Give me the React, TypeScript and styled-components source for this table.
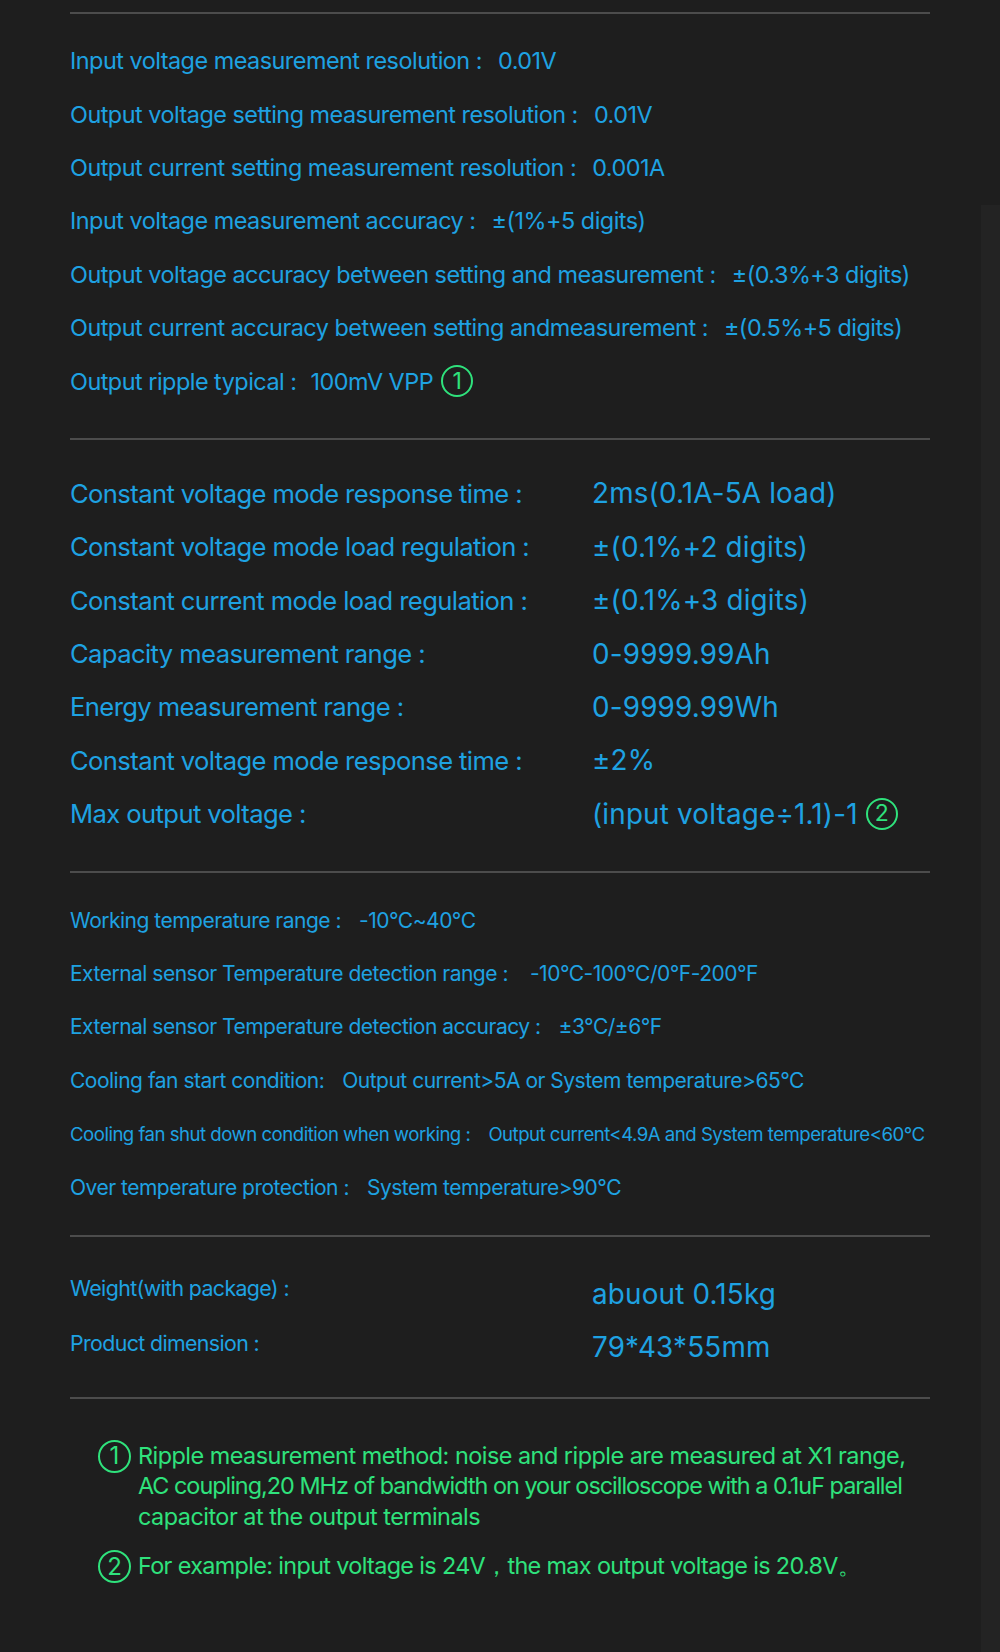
import React from "react";
import styled, { createGlobalStyle } from "styled-components";

const Global = createGlobalStyle`
  html, body { margin: 0; padding: 0; background: #1e1e1e; }
  #root { min-height: 1652px; }
`;

const BLUE = "#1ea2e2";
const GREEN = "#2fe27c";

const Page = styled.div`
  min-height: 1652px;
  box-sizing: border-box;
  padding: 12px 70px 0 70px;
  font-family: Inter, "Noto Sans", sans-serif;
  color: ${BLUE};
  background:
    linear-gradient(#232323, #232323) no-repeat right 0 top 205px / 19px calc(100% - 205px),
    #1e1e1e;
`;

const Divider = styled.hr`
  margin: 0;
  border: 0;
  height: 2px;
  background: #4c4c4c;
  width: 860px;
`;

const Section = styled.section<{ $top: number; $bottom: number }>`
  padding: ${(p) => p.$top}px 0 ${(p) => p.$bottom}px 0;
  display: flex;
  flex-direction: column;
`;

const Row = styled.div<{ $size: number }>`
  height: 53.4px;
  display: flex;
  align-items: center;
  font-size: ${(p) => p.$size}px;
  letter-spacing: -0.5px;
  white-space: nowrap;
`;

const Val = styled.span<{ $gap: number }>`
  margin-left: ${(p) => p.$gap}px;
`;

const Circled = styled.span<{ $size?: number }>`
  display: inline-flex;
  align-items: center;
  justify-content: center;
  box-sizing: border-box;
  width: ${(p) => p.$size ?? 32}px;
  height: ${(p) => p.$size ?? 32}px;
  border: 2.5px solid ${GREEN};
  border-radius: 50%;
  color: ${GREEN};
  font-size: ${(p) => ((p.$size ?? 32) * 0.72).toFixed(0)}px;
  line-height: 1;
  margin-left: 8px;
  letter-spacing: 0;
  flex: none;
`;

const WideRow = styled.div`
  height: 53.4px;
  display: grid;
  grid-template-columns: 522px auto;
  align-items: center;
  white-space: nowrap;
`;

const WideLabel = styled.span<{ $size: number; $raise?: number }>`
  font-size: ${(p) => p.$size}px;
  letter-spacing: -0.6px;
  padding-bottom: ${(p) => p.$raise ?? 0}px;
`;

const WideValue = styled.span`
  display: inline-flex;
  align-items: center;
  font-size: 27.8px;
  letter-spacing: 0.2px;
`;

const Notes = styled.div`
  padding: 42px 0 0 28px;
  display: flex;
  flex-direction: column;
  gap: 19px;
  color: ${GREEN};
  font-size: 23.4px;
  line-height: 30.5px;
`;

const Note = styled.div`
  display: flex;
  align-items: flex-start;
  gap: 7px;
`;

const NoteText = styled.div`
  display: flex;
  flex-direction: column;
  white-space: nowrap;
`;

const NoteLine = styled.span<{ $spacing: number }>`
  letter-spacing: ${(p) => p.$spacing}px;
`;

const NoteMark = styled(Circled)`
  margin-left: 0;
  margin-top: -1px;
`;

const section1: [string, string][] = [
  ["Input voltage measurement resolution :", "0.01V"],
  ["Output voltage setting measurement resolution :", "0.01V"],
  ["Output current setting measurement resolution :", "0.001A"],
  ["Input voltage measurement accuracy :", " ±(1%+5 digits)"],
  ["Output voltage accuracy between setting and measurement :", "±(0.3%+3 digits)"],
  ["Output current accuracy between setting andmeasurement :", "±(0.5%+5 digits)"],
];

const section2: [string, string][] = [
  ["Constant voltage mode response time :", "2ms(0.1A-5A load)"],
  ["Constant voltage mode load regulation :", "±(0.1%+2 digits)"],
  ["Constant current mode load regulation :", "±(0.1%+3 digits)"],
  ["Capacity measurement range :", "0-9999.99Ah"],
  ["Energy measurement range :", "0-9999.99Wh"],
  ["Constant voltage mode response time :", "±2%"],
];

const section3: [string, string, number][] = [
  ["Working temperature range :", "-10°C~40°C", 21],
  ["External sensor Temperature detection range :", "-10°C-100°C/0°F-200°F", 21],
  ["External sensor Temperature detection accuracy :", "±3°C/±6°F", 21],
  ["Cooling fan start condition:", "Output current>5A or System temperature>65°C", 21],
  ["Cooling fan shut down condition when working :", "Output current<4.9A and System temperature<60°C", 18.6],
  ["Over temperature protection :", "System temperature>90°C", 21],
];

export default function App() {
  return (
    <>
      <Global />
      <Page>
        <Divider />
        <Section $top={20} $bottom={30}>
          {section1.map(([l, v], i) => (
            <Row key={i} $size={23.4}>
              {l}
              <Val $gap={16}>{v}</Val>
            </Row>
          ))}
          <Row $size={23.4}>
            Output ripple typical :<Val $gap={14}>100mV VPP</Val>
            <Circled>1</Circled>
          </Row>
        </Section>
        <Divider />
        <Section $top={27} $bottom={31}>
          {section2.map(([l, v], i) => (
            <WideRow key={i}>
              <WideLabel $size={25.6}>{l}</WideLabel>
              <WideValue>{v}</WideValue>
            </WideRow>
          ))}
          <WideRow>
            <WideLabel $size={25.6}>Max output voltage :</WideLabel>
            <WideValue>
              (input voltage÷1.1)-1
              <Circled $size={32}>2</Circled>
            </WideValue>
          </WideRow>
        </Section>
        <Divider />
        <Section $top={20} $bottom={21}>
          {section3.map(([l, v, s], i) => (
            <Row key={i} $size={s}>
              {l}
              <Val $gap={i === 1 ? 22 : 18}>{v}</Val>
            </Row>
          ))}
        </Section>
        <Divider />
        <Section $top={30} $bottom={23}>
          <WideRow>
            <WideLabel $size={21.3} $raise={12}>Weight(with package) :</WideLabel>
            <WideValue>abuout 0.15kg</WideValue>
          </WideRow>
          <WideRow>
            <WideLabel $size={21.3} $raise={8}>Product dimension :</WideLabel>
            <WideValue>79*43*55mm</WideValue>
          </WideRow>
        </Section>
        <Divider />
        <Notes>
          <Note>
            <NoteMark $size={33}>1</NoteMark>
            <NoteText>
              <NoteLine $spacing={-0.5}>
                Ripple measurement method: noise and ripple are measured at X1 range,
              </NoteLine>
              <NoteLine $spacing={-1}>
                AC coupling,20 MHz of bandwidth on your oscilloscope with a 0.1uF parallel
              </NoteLine>
              <NoteLine $spacing={-0.5}>capacitor at the output terminals</NoteLine>
            </NoteText>
          </Note>
          <Note>
            <NoteMark $size={33}>2</NoteMark>
            <NoteText>
              <NoteLine $spacing={-0.65}>
                For example: input voltage is 24V，the max output voltage is 20.8V。
              </NoteLine>
            </NoteText>
          </Note>
        </Notes>
      </Page>
    </>
  );
}
